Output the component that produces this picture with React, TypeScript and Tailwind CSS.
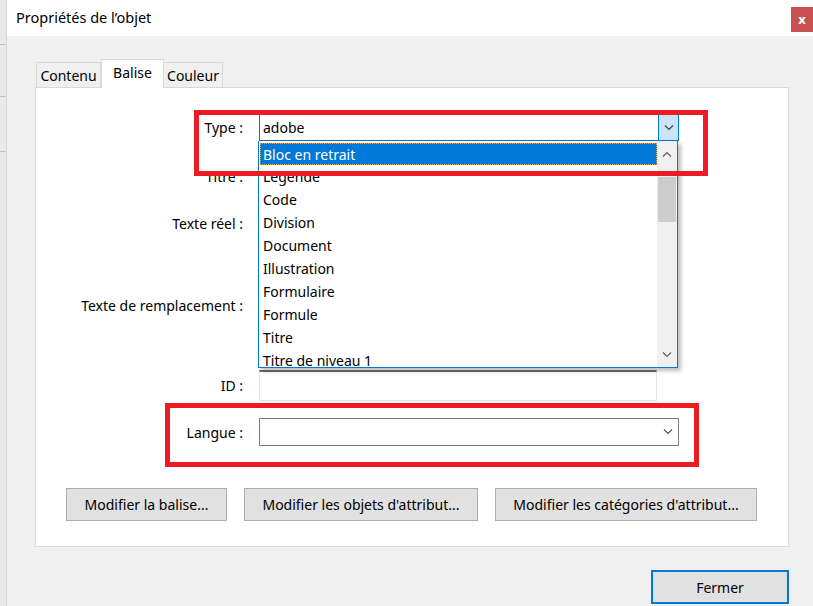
import React from "react";

const font = { fontFamily: '"Noto Sans", "Open Sans", sans-serif' };

const items = [
  "Bloc en retrait",
  "Légende",
  "Code",
  "Division",
  "Document",
  "Illustration",
  "Formulaire",
  "Formule",
  "Titre",
  "Titre de niveau 1",
];

const Chevron: React.FC<{ up?: boolean; className?: string }> = ({ up, className }) => (
  <svg width="10" height="6" viewBox="0 0 10 6" className={className}>
    <path
      d={up ? "M1 5.5 L5 1.5 L9 5.5" : "M1 0.5 L5 4.5 L9 0.5"}
      fill="none"
      stroke="currentColor"
      strokeWidth="1.2"
    />
  </svg>
);

const Label: React.FC<{ children: React.ReactNode }> = ({ children }) => (
  <div className="w-[208px] shrink-0 pr-[1px] text-right text-[14px] text-black">{children}</div>
);

export default function App() {
  return (
    <div className="flex h-[606px] w-[813px] overflow-hidden bg-white" style={font}>
      {/* background window strip */}
      <div className="flex w-[7px] shrink-0 flex-col border-r border-[#d6d6d6] bg-[#e9e9e9]">
        <div className="mt-[44px] h-px bg-[#c4c4c4]" />
        <div className="mt-[51px] h-px bg-[#c4c4c4]" />
        <div className="mt-[54px] h-px bg-[#c4c4c4]" />
      </div>

      <div className="flex flex-1 flex-col">
        {/* title bar */}
        <div className="flex h-[36px] shrink-0 items-start bg-white">
          <div className="mt-[7px] flex-1 pl-[9px] text-[14.5px] text-black">Propriétés de l’objet</div>
          <div className="mt-[7px] flex h-[25px] w-[22px] items-center justify-center bg-[#c75050] text-[13px] font-bold leading-none text-white">
            x
          </div>
        </div>

        {/* body */}
        <div className="flex flex-1 flex-col bg-[#f0f0f0] pl-[28px] pr-[24px]">
          {/* tabs */}
          <div className="mt-[23px] flex h-[28px] items-end pl-[1px] text-[14px] text-black">
            <div className="flex h-[25px] w-[65px] items-center justify-center border border-b-0 border-[#d9d9d9] bg-[#f0f0f0]">
              Contenu
            </div>
            <div className="relative z-10 -mb-px flex h-[29px] w-[63px] items-start justify-center border border-b-0 border-[#d9d9d9] bg-white pt-[2px]">
              Balise
            </div>
            <div className="flex h-[25px] w-[59px] items-center justify-center border border-b-0 border-l-0 border-[#d9d9d9] bg-[#f0f0f0]">
              Couleur
            </div>
          </div>

          {/* panel */}
          <div className="relative flex h-[460px] w-[754px] flex-col border border-[#d9d9d9] bg-white pt-[26px]">
            {/* Type */}
            <div className="flex h-[27px] items-center">
              <Label>Type :</Label>
              <div className="ml-[15px] flex h-[27px] w-[420px] items-stretch border border-[#0078d7] bg-white">
                <div className="flex flex-1 items-center pl-[3px] text-[14px] text-black">adobe</div>
                <div className="flex w-[20px] items-center justify-center border-l border-[#0078d7] bg-[#cce4f7] text-[#404040]">
                  <Chevron />
                </div>
              </div>
            </div>

            {/* Titre */}
            <div className="mt-[22px] flex h-[26px] items-center">
              <Label>Titre :</Label>
              <div className="ml-[15px] h-[26px] w-[398px] border border-[#7a7a7a]" />
            </div>

            {/* Texte réel */}
            <div className="mt-[21px] flex h-[26px] items-center">
              <Label>Texte réel :</Label>
              <div className="ml-[15px] h-[26px] w-[398px] border border-[#7a7a7a]" />
            </div>

            {/* Texte de remplacement */}
            <div className="mt-[27px] flex h-[84px] items-center">
              <Label>Texte de remplacement :</Label>
              <div className="ml-[15px] h-[84px] w-[398px] border border-[#7a7a7a]" />
            </div>

            {/* ID */}
            <div className="mt-[23px] flex h-[31px] items-center">
              <Label>ID :</Label>
              <div className="ml-[15px] h-[31px] w-[398px] border border-t-2 border-[#e3e3e3] border-t-[#6d6d6d]" />
            </div>

            {/* Langue */}
            <div className="mt-[17px] flex h-[28px] items-center">
              <Label>Langue :</Label>
              <div className="ml-[15px] flex h-[28px] w-[420px] items-center justify-end border border-[#7a7a7a] pr-[5px] text-[#555]">
                <Chevron />
              </div>
            </div>

            {/* buttons */}
            <div className="mt-[42px] flex gap-[17px] pl-[30px] text-[14px] text-black">
              <button className="h-[33px] w-[161px] border border-[#adadad] bg-[#e1e1e1]">Modifier la balise...</button>
              <button className="h-[33px] w-[234px] border border-[#adadad] bg-[#e1e1e1]">
                Modifier les objets d'attribut...
              </button>
              <button className="h-[33px] w-[262px] border border-[#adadad] bg-[#e1e1e1]">
                Modifier les catégories d'attribut...
              </button>
            </div>

            {/* open dropdown list */}
            <div className="absolute left-[222px] top-[53px] z-20 flex h-[227px] w-[420px] border border-t-0 border-[#0078d7] bg-white shadow-[3px_3px_4px_rgba(0,0,0,0.25)]">
              <div className="flex flex-1 flex-col overflow-hidden pl-[1px] pt-[2px] text-[14px] text-black">
                {items.map((it, i) => (
                  <div
                    key={it}
                    className={
                      i === 0
                        ? "flex h-[22px] shrink-0 items-center border border-dotted border-[#f0a030] bg-[#0078d7] pl-[2px] text-white"
                        : "flex h-[23px] shrink-0 items-center pl-[3px]"
                    }
                  >
                    {it}
                  </div>
                ))}
              </div>
              <div className="flex w-[20px] flex-col bg-[#f0f0f0] text-[#606060]">
                <div className="flex h-[26px] items-center justify-center">
                  <Chevron up />
                </div>
                <div className="mx-[1px] mt-[10px] h-[45px] bg-[#cdcdcd]" />
                <div className="flex-1" />
                <div className="flex h-[24px] items-center justify-center">
                  <Chevron />
                </div>
              </div>
            </div>

            {/* red annotation boxes */}
            <div className="pointer-events-none absolute left-[158px] top-[22px] z-30 h-[66px] w-[514px] border-[5px] border-[#ed1c24]" />
            <div className="pointer-events-none absolute left-[129px] top-[315px] z-30 h-[64px] w-[534px] border-[5px] border-[#ed1c24]" />
          </div>

          {/* footer */}
          <div className="mt-[23px] flex justify-end">
            <button className="h-[34px] w-[138px] border-2 border-[#0078d7] bg-[#e1e1e1] text-[14px] text-black">
              Fermer
            </button>
          </div>
        </div>
      </div>
    </div>
  );
}
